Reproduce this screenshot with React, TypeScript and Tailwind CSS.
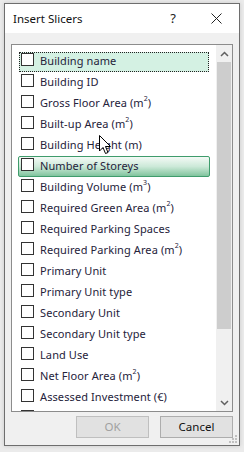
import { ReactNode } from 'react';

type Item = { label: ReactNode; mode?: 'focus' | 'hover' };

const sup = (n: string) => <sup className="text-[7px] relative -top-[1px] align-super leading-none">{n}</sup>;

const items: Item[] = [
  { label: 'Building name', mode: 'focus' },
  { label: 'Building ID' },
  { label: <>Gross Floor Area (m{sup('2')})</> },
  { label: <>Built-up Area (m{sup('2')})</> },
  { label: 'Building Height (m)' },
  { label: 'Number of Storeys', mode: 'hover' },
  { label: <>Building Volume (m{sup('3')})</> },
  { label: <>Required Green Area (m{sup('2')})</> },
  { label: 'Required Parking Spaces' },
  { label: <>Required Parking Area (m{sup('2')})</> },
  { label: 'Primary Unit' },
  { label: 'Primary Unit type' },
  { label: 'Secondary Unit' },
  { label: 'Secondary Unit type' },
  { label: 'Land Use' },
  { label: <>Net Floor Area (m{sup('2')})</> },
  { label: 'Assessed Investment (€)' },
  { label: '' },
];

function Row({ item }: { item: Item }) {
  // focus = dotted outline on mint, hover = green gradient pill
  const box =
    item.mode === 'focus'
      ? 'bg-[#d4f1e3] outline-1 outline-dotted outline-[#222] -outline-offset-1'
      : item.mode === 'hover'
        ? 'bg-gradient-to-b from-[#f4faf6] via-[#cce9d8] to-[#80c49e] border border-[#3f9c6c] rounded-[2px] -ml-[1px] w-[192px] h-[21px] -mt-[1px]'
        : '';
  return (
    <div className="h-[21px] shrink-0">
      <div className={`flex items-start gap-[6px] w-[190px] h-[20px] pl-[2px] ${box}`}>
        <div className="w-[13px] h-[13px] mt-[1px] border border-[#333] bg-white shrink-0" />
        <span className="text-[11px] leading-[16px] mt-[1px] text-[#25223a] tracking-[0.1px] whitespace-nowrap">{item.label}</span>
      </div>
    </div>
  );
}

export default function App() {
  return (
    <div
      className="w-[244px] h-[452px] bg-[#ebebeb] pl-[4px] pt-[3px] overflow-hidden"
      style={{ fontFamily: '"Noto Sans", "Open Sans", sans-serif' }}
    >
      <div className="relative w-[236px] h-[443px] border border-[#6e6e6e] bg-[#f0f0f0] flex flex-col shadow-[0_0_4px_rgba(0,0,0,0.15)]">
        {/* Title bar */}
        <div className="h-[29px] bg-white flex items-center shrink-0">
          <span className="pl-[8px] text-[11.5px] text-[#111] flex-1">Insert Slicers</span>
          <span className="text-[13px] text-[#222] mr-[35px]">?</span>
          <svg width="11" height="11" viewBox="0 0 11 11" className="mr-[17px]">
            <path d="M0.5 0.5 L10.5 10.5 M10.5 0.5 L0.5 10.5" stroke="#222" strokeWidth="1" />
          </svg>
        </div>

        {/* List box */}
        <div className="ml-[6px] mt-[11px] w-[222px] h-[368px] border border-[#8c8c8c] bg-white flex overflow-hidden">
          <div className="flex-1 flex flex-col pt-[7px] pl-[7px] overflow-hidden">
            {items.map((it, i) => (
              <Row key={i} item={it} />
            ))}
          </div>
          {/* Scrollbar */}
          <div className="w-[16px] bg-[#f0f0f0] flex flex-col shrink-0">
            <div className="h-[17px] flex items-center justify-center">
              <svg width="9" height="6" viewBox="0 0 9 6">
                <path d="M1 5 L4.5 1.5 L8 5" stroke="#606060" strokeWidth="1.5" fill="none" />
              </svg>
            </div>
            <div className="h-[267px] mx-[1px] bg-[#cdcdcd]" />
            <div className="flex-1" />
            <div className="h-[17px] flex items-center justify-center">
              <svg width="9" height="6" viewBox="0 0 9 6">
                <path d="M1 1 L4.5 4.5 L8 1" stroke="#606060" strokeWidth="1.5" fill="none" />
              </svg>
            </div>
          </div>
        </div>

        {/* Buttons */}
        <div className="flex justify-end gap-[11px] mt-[4px] mr-[6px]">
          <div className="w-[73px] h-[22px] border border-[#bfbfbf] bg-[#e1e1e1] flex items-center justify-center text-[11.5px] text-[#a0a0a0]">
            OK
          </div>
          <div className="w-[73px] h-[22px] border border-[#adadad] bg-[#e1e1e1] flex items-center justify-center text-[11.5px] text-[#111]">
            Cancel
          </div>
        </div>

        {/* Resize grip */}
        <svg width="8" height="8" viewBox="0 0 8 8" className="absolute right-[2px] bottom-[2px]">
          <rect x="6" y="0" width="2" height="2" fill="#c0c0c0" />
          <rect x="3" y="3" width="2" height="2" fill="#c0c0c0" />
          <rect x="6" y="3" width="2" height="2" fill="#c0c0c0" />
          <rect x="0" y="6" width="2" height="2" fill="#c0c0c0" />
          <rect x="3" y="6" width="2" height="2" fill="#c0c0c0" />
          <rect x="6" y="6" width="2" height="2" fill="#c0c0c0" />
        </svg>

        {/* Mouse pointer */}
        <svg width="13" height="20" viewBox="0 0 13 20" className="absolute left-[94px] top-[131px]">
          <path
            d="M0.5 0.5 L0.5 16 L4 12.5 L6.5 18.5 L9 17.5 L6.5 11.5 L11.5 11.5 Z"
            fill="white"
            stroke="black"
            strokeWidth="1"
            strokeLinejoin="round"
          />
        </svg>
      </div>
    </div>
  );
}
